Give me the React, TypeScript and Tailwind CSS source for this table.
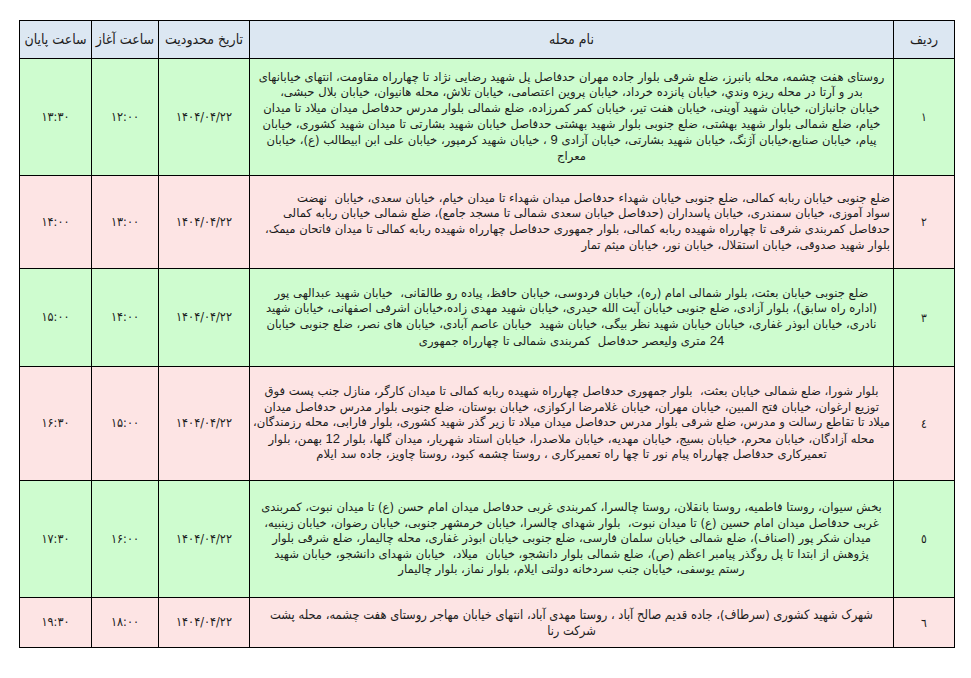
const rows = [
  {
    num: "۱",
    date: "۱۴۰۴/۰۴/۲۲",
    start: "۱۲:۰۰",
    end: "۱۳:۳۰",
    bg: "bg-[#cefccf]",
    h: "h-[117px]",
    align: "text-center",
    lines: [
      "روستای هفت چشمه، محله بانبرز، ضلع شرقی بلوار جاده مهران حدفاصل پل شهید رضایی نژاد تا چهارراه مقاومت، انتهای خیابانهای",
      "بدر و آرتا در محله ریزه وندي، خیابان پانزده خرداد، خیابان پروین اعتصامی، خیابان تلاش، محله هانیوان، خیابان بلال حبشی،",
      "خیابان جانبازان، خیابان شهید آوینی، خیابان هفت تیر، خیابان کمر کمرزاده، ضلع شمالی بلوار مدرس حدفاصل میدان میلاد تا میدان",
      "خیام، ضلع شمالی بلوار شهید بهشتی، ضلع جنوبی بلوار شهید بهشتی حدفاصل خیابان شهید بشارتی تا میدان شهید کشوری، خیابان",
      "پیام، خیابان صنایع،خیابان آژنگ، خیابان شهید بشارتی، خیابان آزادی 9 ، خیابان شهید کرمپور، خیابان علی ابن ابیطالب (ع)، خیابان",
      "معراج",
    ],
  },
  {
    num: "۲",
    date: "۱۴۰۴/۰۴/۲۲",
    start: "۱۳:۰۰",
    end: "۱۴:۰۰",
    bg: "bg-[#fde4e4]",
    h: "h-[93px]",
    align: "text-right",
    lines: [
      "ضلع جنوبی خیابان ربابه کمالی، ضلع جنوبی خیابان شهداء حدفاصل میدان شهداء تا میدان خیام، خیابان سعدی، خیابان  نهضت",
      "سواد آموزی، خیابان سمندری، خیابان پاسداران (حدفاصل خیابان سعدی شمالی تا مسجد جامع)، ضلع شمالی خیابان ربابه کمالی",
      "حدفاصل کمربندی شرقی تا چهارراه شهیده ربابه کمالی، بلوار جمهوری حدفاصل چهارراه شهیده ربابه کمالی تا میدان فاتحان میمک،",
      "بلوار شهید صدوقی، خیابان استقلال، خیابان نور، خیابان میثم تمار",
    ],
  },
  {
    num: "۳",
    date: "۱۴۰۴/۰۴/۲۲",
    start: "۱۴:۰۰",
    end: "۱۵:۰۰",
    bg: "bg-[#cefccf]",
    h: "h-[98px]",
    align: "text-center",
    lines: [
      "ضلع جنوبی خیابان بعثت، بلوار شمالی امام (ره)، خیابان فردوسی، خیابان حافظ، پیاده رو طالقانی،  خیابان شهید عبدالهی پور",
      "(اداره راه سابق)، بلوار آزادی، ضلع جنوبی خیابان آیت الله حیدری، خیابان شهید مهدی زاده،خیابان اشرفی اصفهانی، خیابان شهید",
      "نادری، خیابان ابوذر غفاری، خیابان خیابان شهید نظر بیگی، خیابان شهید  خیابان عاصم آبادی، خیابان های نصر، ضلع جنوبی خیابان",
      "24 متری ولیعصر حدفاصل  کمربندی شمالی تا چهارراه جمهوری",
    ],
  },
  {
    num: "٤",
    date: "۱۴۰۴/۰۴/۲۲",
    start: "۱۵:۰۰",
    end: "۱۶:۳۰",
    bg: "bg-[#fde4e4]",
    h: "h-[114px]",
    align: "text-center",
    lines: [
      "بلوار شورا، ضلع شمالی خیابان بعثت،  بلوار جمهوری حدفاصل چهارراه شهیده ربابه کمالی تا میدان کارگر، منازل جنب پست فوق",
      "توزیع ارغوان، خیابان فتح المبین، خیابان مهران، خیابان غلامرضا ارکوازی، خیابان بوستان، ضلع جنوبی بلوار مدرس حدفاصل میدان",
      "میلاد تا تقاطع رسالت و مدرس، ضلع شرقی بلوار مدرس حدفاصل میدان میلاد تا زیر گذر شهید کشوری، بلوار فارابی، محله رزمندگان،",
      "محله آزادگان، خیابان محرم، خیابان بسیج، خیابان مهدیه، خیابان ملاصدرا، خیابان استاد شهریار، میدان گلها، بلوار 12 بهمن، بلوار",
      "تعمیرکاری حدفاصل چهارراه پیام نور تا چها راه تعمیرکاری ، روستا چشمه کبود، روستا چاویز، جاده سد ایلام",
    ],
  },
  {
    num: "٥",
    date: "۱۴۰۴/۰۴/۲۲",
    start: "۱۶:۰۰",
    end: "۱۷:۳۰",
    bg: "bg-[#cefccf]",
    h: "h-[117px]",
    align: "text-center",
    lines: [
      "بخش سیوان، روستا فاطمیه، روستا بانقلان، روستا چالسرا، کمربندی غربی حدفاصل میدان امام حسن (ع) تا میدان نبوت، کمربندی",
      "غربی حدفاصل میدان امام حسین (ع) تا میدان نبوت،  بلوار شهدای چالسرا، خیابان خرمشهر جنوبی، خیابان رضوان، خیابان زینبیه،",
      "میدان شکر پور (اصناف)، ضلع شمالی خیابان سلمان فارسی، ضلع جنوبی خیابان ابوذر غفاری، محله چالیمار، ضلع شرقی بلوار",
      "پژوهش از ابتدا تا پل روگذر پیامبر اعظم (ص)، ضلع شمالی بلوار دانشجو، خیابان  میلاد،  خیابان شهدای دانشجو، خیابان شهید",
      "رستم یوسفی، خیابان جنب سردخانه دولتی ایلام، بلوار نماز، بلوار چالیمار",
    ],
  },
  {
    num: "٦",
    date: "۱۴۰۴/۰۴/۲۲",
    start: "۱۸:۰۰",
    end: "۱۹:۳۰",
    bg: "bg-[#fde4e4]",
    h: "h-[50px]",
    align: "text-center",
    narrow: true,
    lines: [
      "شهرک شهید کشوری (سرطاف)، جاده قدیم صالح آباد ، روستا مهدی آباد، انتهای خیابان مهاجر روستای هفت چشمه، محله پشت",
      "شرکت رنا",
    ],
  },
]

const narrowFont = "font-['DejaVu_Sans_Condensed','DejaVu_Sans',sans-serif]"
const bodyFont = "font-['DejaVu_Sans',sans-serif]"

// latin numbers inside the persian text are drawn a bit larger, like in the source sheet
function Line({ text }: { text: string }) {
  const parts = text.split(/(\d+)/)
  return (
    <>
      {parts.map((p, k) =>
        /^\d+$/.test(p) ? (
          <span key={k} className="text-[13px] font-['Liberation_Sans',sans-serif]">
            {p}
          </span>
        ) : (
          <span key={k}>{p}</span>
        )
      )}
    </>
  )
}

export default function App() {
  return (
    <div className="w-[971px] h-[678px] bg-white pt-[20px] pl-[19px]">
      <table dir="rtl" className="table-fixed border-collapse w-[935px] text-[#1c1c1c]">
        <colgroup>
          <col className="w-[61px]" />
          <col className="w-[644px]" />
          <col className="w-[91px]" />
          <col className="w-[67px]" />
          <col className="w-[72px]" />
        </colgroup>
        <thead>
          <tr className={`h-[38px] bg-[#dce7f2] text-[14px] ${narrowFont}`}>
            <th className="border border-black font-normal">ردیف</th>
            <th className="border border-black font-normal">نام محله</th>
            <th className="border border-black font-normal">تاریخ محدودیت</th>
            <th className="border border-black font-normal">ساعت آغاز</th>
            <th className="border border-black font-normal">ساعت پایان</th>
          </tr>
        </thead>
        <tbody>
          {rows.map((row, i) => (
            <tr key={i} className={`${row.h} ${row.bg}`}>
              <td className={`border border-black text-center text-[12px] ${narrowFont}`}>{row.num}</td>
              <td className={`border border-black px-[3px] overflow-hidden ${row.align}`}>
                {row.lines.map((line, j) => (
                  <div
                    key={j}
                    className={`whitespace-pre leading-[15.6px] ${row.narrow ? `text-[12.8px] ${narrowFont}` : `text-[11.6px] ${bodyFont}`}`}
                  >
                    <Line text={line} />
                  </div>
                ))}
              </td>
              <td className={`border border-black text-center text-[12.5px] ${narrowFont}`}>{row.date}</td>
              <td className={`border border-black text-center text-[12.5px] ${narrowFont}`}>{row.start}</td>
              <td className={`border border-black text-center text-[12.5px] ${narrowFont}`}>{row.end}</td>
            </tr>
          ))}
        </tbody>
      </table>
    </div>
  )
}
